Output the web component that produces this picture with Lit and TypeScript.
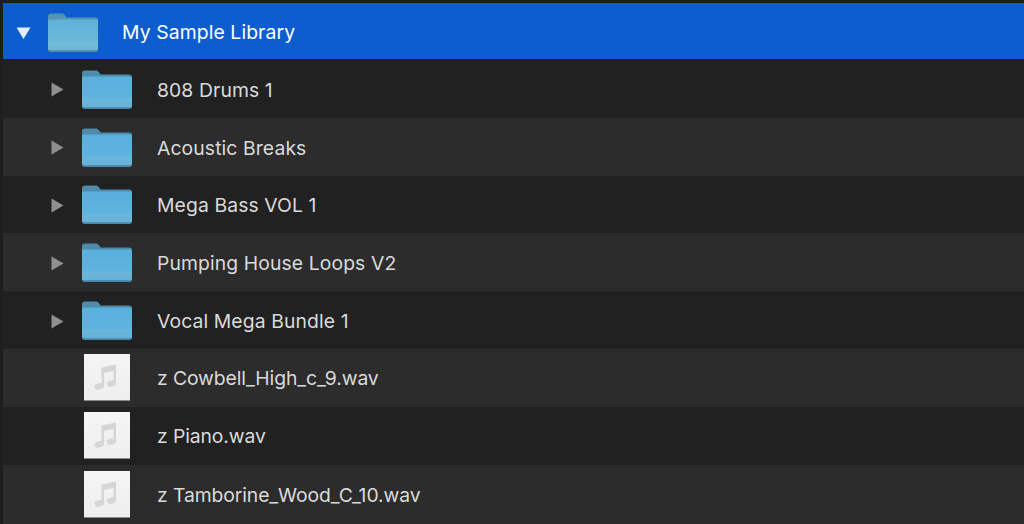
import { LitElement, html, css, svg } from "lit";
import { customElement } from "lit/decorators.js";

type Item = { name: string; kind: "folder" | "file" };

const items: Item[] = [
  { name: "808 Drums 1", kind: "folder" },
  { name: "Acoustic Breaks", kind: "folder" },
  { name: "Mega Bass VOL 1", kind: "folder" },
  { name: "Pumping House Loops V2", kind: "folder" },
  { name: "Vocal Mega Bundle 1", kind: "folder" },
  { name: "z Cowbell_High_c_9.wav", kind: "file" },
  { name: "z Piano.wav", kind: "file" },
  { name: "z Tamborine_Wood_C_10.wav", kind: "file" },
];

const folderIcon = (selected: boolean) => {
  const id = selected ? "sel" : "nor";
  return html`<svg class="folder" width="50" height="40" viewBox="0 0 50 40">
    <defs>
      <linearGradient id="body-${id}" x1="0" y1="0" x2="0" y2="1">
        <stop offset="0" stop-color=${selected ? "#5fb2d8" : "#58b0dd"} />
        <stop offset="0.66" stop-color=${selected ? "#6ab8da" : "#5fb3de"} />
        <stop offset="0.7" stop-color=${selected ? "#74bcd9" : "#6ab7dc"} />
        <stop offset="1" stop-color=${selected ? "#70b5d2" : "#66b0d6"} />
      </linearGradient>
    </defs>
    ${svg`<path d="M0 3.2C0 1.4 1.2 0.4 3 0.4H13.5C15.2 0.4 16 1 16.8 2L18.6 4.4H47C48.8 4.4 50 5.4 50 7V12H0Z" fill=${selected ? "#5593b3" : "#4f8cac"} />
    <path d="M0 8.2C0 7.2 0.8 6.6 2 6.6H48C49.2 6.6 50 7.2 50 8.2V36C50 37.8 48.9 38.8 47.2 38.8H2.8C1.1 38.8 0 37.8 0 36Z" fill="url(#body-${id})" />
    <path d="M0 36C0 37.8 1.1 38.8 2.8 38.8H47.2C48.9 38.8 50 37.8 50 36V35.2C50 36.6 49 37.3 47.6 37.3H2.4C1 37.3 0 36.6 0 35.2Z" fill=${selected ? "#4b87a8" : "#4585a8"} />`}
  </svg>`;
};

const fileIcon = () => html`<svg class="file" width="46" height="47" viewBox="0 0 46 47">
  <defs>
    <linearGradient id="page" x1="0" y1="0" x2="0" y2="1">
      <stop offset="0" stop-color="#f5f5f5" />
      <stop offset="1" stop-color="#eeeeee" />
    </linearGradient>
    <filter id="soft" x="-20%" y="-20%" width="140%" height="140%">
      <feGaussianBlur stdDeviation="0.6" />
    </filter>
  </defs>
  ${svg`<rect width="46" height="47" fill="url(#page)" />
  <rect y="46" width="46" height="1" fill="#8b8b8b" />
  <g filter="url(#soft)" fill="#d6d6d6">
    <path d="M17.5 13.5L32 10.5V29.5H29.4V17L20.1 19V33H17.5Z" />
    <ellipse cx="15.2" cy="32.4" rx="4.8" ry="3.2" transform="rotate(-14 15.2 32.4)" />
    <ellipse cx="27.4" cy="29.6" rx="4.6" ry="3.1" transform="rotate(-14 27.4 29.6)" />
  </g>`}
</svg>`;

@customElement("app-root")
export class AppRoot extends LitElement {
  static styles = css`
    :host {
      display: block;
      width: 1024px;
      height: 524px;
      overflow: hidden;
      background: #1e1e1e;
      font-family: Inter, "Liberation Sans", sans-serif;
    }

    .list {
      display: flex;
      flex-direction: column;
      box-sizing: border-box;
      height: 524px;
      padding: 3px 0 0 3px;
    }

    .row {
      display: flex;
      align-items: center;
      flex: none;
      height: 57.8px;
      color: #dadada;
      font-size: 19.35px;
      letter-spacing: 0.1px;
    }

    .row.root {
      height: 56px;
      margin-bottom: 1px;
      padding-left: 13px;
      background: #0e5dcf;
      color: #fff;
    }

    .row.child {
      padding-left: 47px;
      background: #212121;
    }

    .row.child:nth-child(odd) {
      background: #2c2c2c;
    }

    .row.child:last-child {
      flex: 1;
    }

    .twisty {
      flex: none;
      width: 15px;
      height: 15px;
      margin-top: 2px;
      margin-right: 17px;
    }

    .folder,
    .file {
      flex: none;
      display: block;
    }

    .file {
      margin-left: 34px;
      margin-right: 27px;
    }

    .folder {
      margin-top: 2px;
      margin-right: 25px;
    }

    .root .folder {
      margin-top: 3px;
      margin-right: 24px;
    }

    .raised {
      margin-top: 2px;
    }

    .file-name {
      margin-top: 1px;
      letter-spacing: -0.1px;
    }
  `;

  render() {
    return html`<div class="list">
      <div class="row root">
        <svg class="twisty" viewBox="0 0 15 15">
          <path d="M0.5 2.5H14.5L7.5 14Z" fill="#e2edfb" />
        </svg>
        ${folderIcon(true)}
        <span class="raised">My Sample Library</span>
      </div>
      ${items.map(
        (item) => html`<div class="row child">
          ${item.kind === "folder"
            ? html`<svg class="twisty" viewBox="0 0 15 15">
                  <path d="M1.5 0.5L13.5 7.5L1.5 14.5Z" fill="#8f8f8f" />
                </svg>
                ${folderIcon(false)}`
            : fileIcon()}
          <span class=${item.kind === "folder" ? "raised" : "file-name"}>${item.name}</span>
        </div>`,
      )}
    </div>`;
  }
}
